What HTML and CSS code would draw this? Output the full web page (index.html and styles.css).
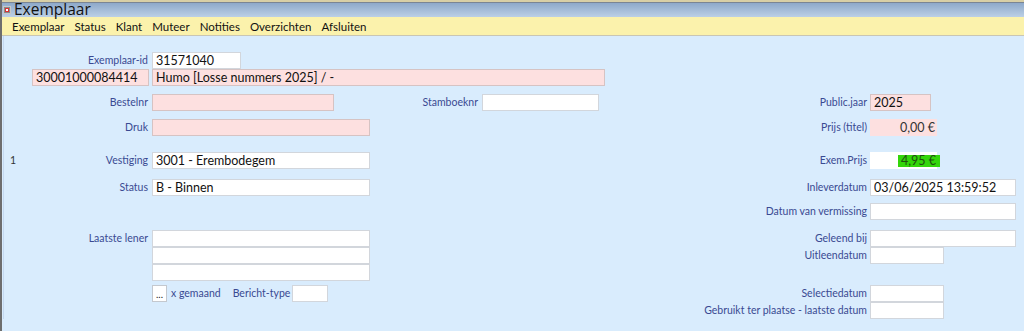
FILE: index.html
```html
<!DOCTYPE html>
<html lang="nl">
<head>
    <meta charset="UTF-8">
    <meta name="viewport" content="width=device-width, initial-scale=1.0">
    <title>Exemplaar</title>
    <link rel="stylesheet" href="styles.css">
</head>
<body>
    <div class="venster">
        <div class="titelbalk">
            <svg class="icoon" width="8" height="8" viewBox="0 0 8 8">
                <rect x="0" y="0" width="8" height="8" fill="#c8c8c8"/>
                <rect x="1" y="1" width="6" height="6" fill="#8a8a8a"/>
                <rect x="2" y="2" width="4" height="4" fill="#d33"/>
                <rect x="3" y="3" width="2" height="2" fill="#fff"/>
            </svg>
            <span class="titel">Exemplaar</span>
        </div>
        <div class="menubalk">
            <span>Exemplaar</span>
            <span>Status</span>
            <span>Klant</span>
            <span>Muteer</span>
            <span>Notities</span>
            <span>Overzichten</span>
            <span>Afsluiten</span>
        </div>
        <div class="formulier">
            <!-- rij 1 -->
            <label class="lbl c1 r1">Exemplaar-id</label>
            <input class="veld wit c2 r1 w88" value="31571040">

            <!-- rij 2 -->
            <input class="veld roze c1 r2 barcode" value="30001000084414">
            <input class="veld roze r2 titelveld" value="Humo [Losse nummers 2025] / -">

            <!-- rij 3 -->
            <label class="lbl c1 r3">Bestelnr</label>
            <input class="veld roze c2 r3 w181" value="">
            <label class="lbl c3 r3">Stamboeknr</label>
            <input class="veld wit c4 r3 w116" value="">
            <label class="lbl c5 r3">Public.jaar</label>
            <input class="veld roze c6 r3 w60" value="2025">

            <!-- rij 4 -->
            <label class="lbl c1 r4">Druk</label>
            <input class="veld roze c2 r4 w217" value="">
            <label class="lbl c5 r4">Prijs (titel)</label>
            <div class="bedrag roze c6 r4">0,00 €</div>

            <!-- rij 5 -->
            <div class="lbl c1 r5 tussen"><span class="nummer">1</span><label>Vestiging</label></div>
            <input class="veld wit c2 r5 w217" value="3001 - Erembodegem">
            <label class="lbl c5 r5">Exem.Prijs</label>
            <div class="bedrag wit c6 r5"><span class="groen">4,95 €</span></div>

            <!-- rij 6 -->
            <label class="lbl c1 r6">Status</label>
            <input class="veld wit c2 r6 w217" value="B - Binnen">
            <label class="lbl c5 r6">Inleverdatum</label>
            <input class="veld wit c6 r6 w145" value="03/06/2025 13:59:52">

            <!-- rij 7 -->
            <label class="lbl c5 r7">Datum van vermissing</label>
            <input class="veld wit c6 r7 w145" value="">

            <!-- rij 8 -->
            <label class="lbl c1 r8">Laatste lener</label>
            <input class="veld wit c2 r8 w217" value="">
            <label class="lbl c5 r8">Geleend bij</label>
            <input class="veld wit c6 r8 w145" value="">

            <!-- rij 9 -->
            <input class="veld wit c2 r9 w217" value="">
            <label class="lbl c5 r9">Uitleendatum</label>
            <input class="veld wit c6 r9 w73" value="">

            <!-- rij 10 -->
            <input class="veld wit c2 r10 w217" value="">

            <!-- rij 11 -->
            <div class="aanmaning c2 r11">
                <button class="knop">...</button>
                <span class="lbl gemaand">x gemaand</span>
                <span class="lbl">Bericht-type</span>
                <input class="veld wit w35" value="">
            </div>
            <label class="lbl c5 r11">Selectiedatum</label>
            <input class="veld wit c6 r11 w73" value="">

            <!-- rij 12 -->
            <label class="lbl c5 r12">Gebruikt ter plaatse - laatste datum</label>
            <input class="veld wit c6 r12 w73" value="">
        </div>
    </div>
</body>
</html>
```

FILE: styles.css
```css
html, body {
    margin: 0;
    padding: 0;
}

body {
    font-family: Lato, 'Open Sans', sans-serif;
    background-color: #d9ecfd;
    width: 1024px;
    height: 331px;
    overflow: hidden;
}

.venster {
    height: 331px;
    border-left: 2px solid #6e6e6e;
    box-sizing: border-box;
}

.titelbalk {
    height: 15px;
    border-top: 2px solid #d8cfa6;
    box-shadow: inset 0 1px 0 #7a8594;
    background: linear-gradient(#8aa6c8, #bcd0e6);
    display: flex;
    align-items: center;
    padding-left: 1px;
}

.icoon {
    margin-right: 3px;
}

.titel {
    font-family: 'Open Sans', sans-serif;
    font-size: 15.5px;
    color: #111;
    line-height: 15px;
}

.menubalk {
    height: 18px;
    background-color: #fbf2ac;
    border-bottom: 1px solid #c9c6b4;
    display: flex;
    align-items: center;
    gap: 10px;
    padding-left: 10px;
    font-size: 11.5px;
    color: #111;
}

.formulier {
    display: grid;
    border-left: 1px solid #c4d8f0;
    margin-left: 1px;
    padding-top: 16px;
    grid-template-columns: 148px 248px 82px 178px 210px 154px;
    grid-template-rows: 17px 25px 25px 33px 27px 24px 27px 17px 17px 21px 17px 17px;
    align-items: start;
}

.c1 { grid-column: 1; }
.c2 { grid-column: 2; }
.c3 { grid-column: 3; }
.c4 { grid-column: 4; }
.c5 { grid-column: 5; }
.c6 { grid-column: 6; }

.r1 { grid-row: 1; }
.r2 { grid-row: 2; }
.r3 { grid-row: 3; }
.r4 { grid-row: 4; }
.r5 { grid-row: 5; }
.r6 { grid-row: 6; }
.r7 { grid-row: 7; }
.r8 { grid-row: 8; }
.r9 { grid-row: 9; }
.r10 { grid-row: 10; }
.r11 { grid-row: 11; }
.r12 { grid-row: 12; }

.lbl {
    font-size: 10.5px;
    color: #3a4a92;
    line-height: 17px;
    white-space: nowrap;
}

label.lbl, .tussen {
    justify-self: end;
    padding-right: 4px;
}

.c5.lbl {
    padding-right: 3px;
}

.tussen {
    justify-self: stretch;
    display: flex;
    justify-content: space-between;
}

.nummer {
    padding-left: 6px;
    color: #333;
}

.veld {
    box-sizing: border-box;
    height: 17px;
    margin: 0;
    padding: 0 3px;
    font-family: inherit;
    font-size: 12.5px;
    color: #111;
    outline: none;
}

.wit {
    background-color: #fff;
    border: 1px solid #d2d6dc;
}

.roze {
    background-color: #fde0e0;
    border: 1px solid #d6c3c3;
}

.barcode {
    width: 117px;
    justify-self: end;
    margin-right: 3px;
}

.titelveld {
    grid-column: 2 / 5;
    width: 453px;
}

.w35 { width: 36px; }
.w60 { width: 61px; }
.w73 { width: 74px; }
.w88 { width: 89px; }
.w116 { width: 117px; }
.w145 { width: 146px; }
.w181 { width: 182px; }
.w217 { width: 218px; }

.bedrag {
    box-sizing: border-box;
    width: 67px;
    height: 17px;
    font-size: 12.5px;
    line-height: 17px;
    text-align: right;
    padding-right: 2px;
    color: #333;
    white-space: nowrap;
}

.bedrag.roze,
.bedrag.wit {
    border: none;
}

.groen {
    display: inline-block;
    background-color: #33d60a;
    color: #205010;
    line-height: 12px;
    padding: 0 4px 0 3px;
    margin-right: -5px;
}

.aanmaning {
    display: flex;
    align-items: center;
    gap: 3px;
}

.knop {
    box-sizing: border-box;
    width: 15px;
    height: 17px;
    padding: 0;
    margin: 0 1px 0 0;
    border: 1px solid #c4c8ce;
    background-color: #fff;
    font-family: inherit;
    font-size: 10px;
    line-height: 10px;
    color: #222;
}

.aanmaning .lbl {
    font-size: 10.5px;
}

.gemaand {
    margin-right: 9px;
}

.aanmaning .veld {
    margin-left: -1px;
}
```
